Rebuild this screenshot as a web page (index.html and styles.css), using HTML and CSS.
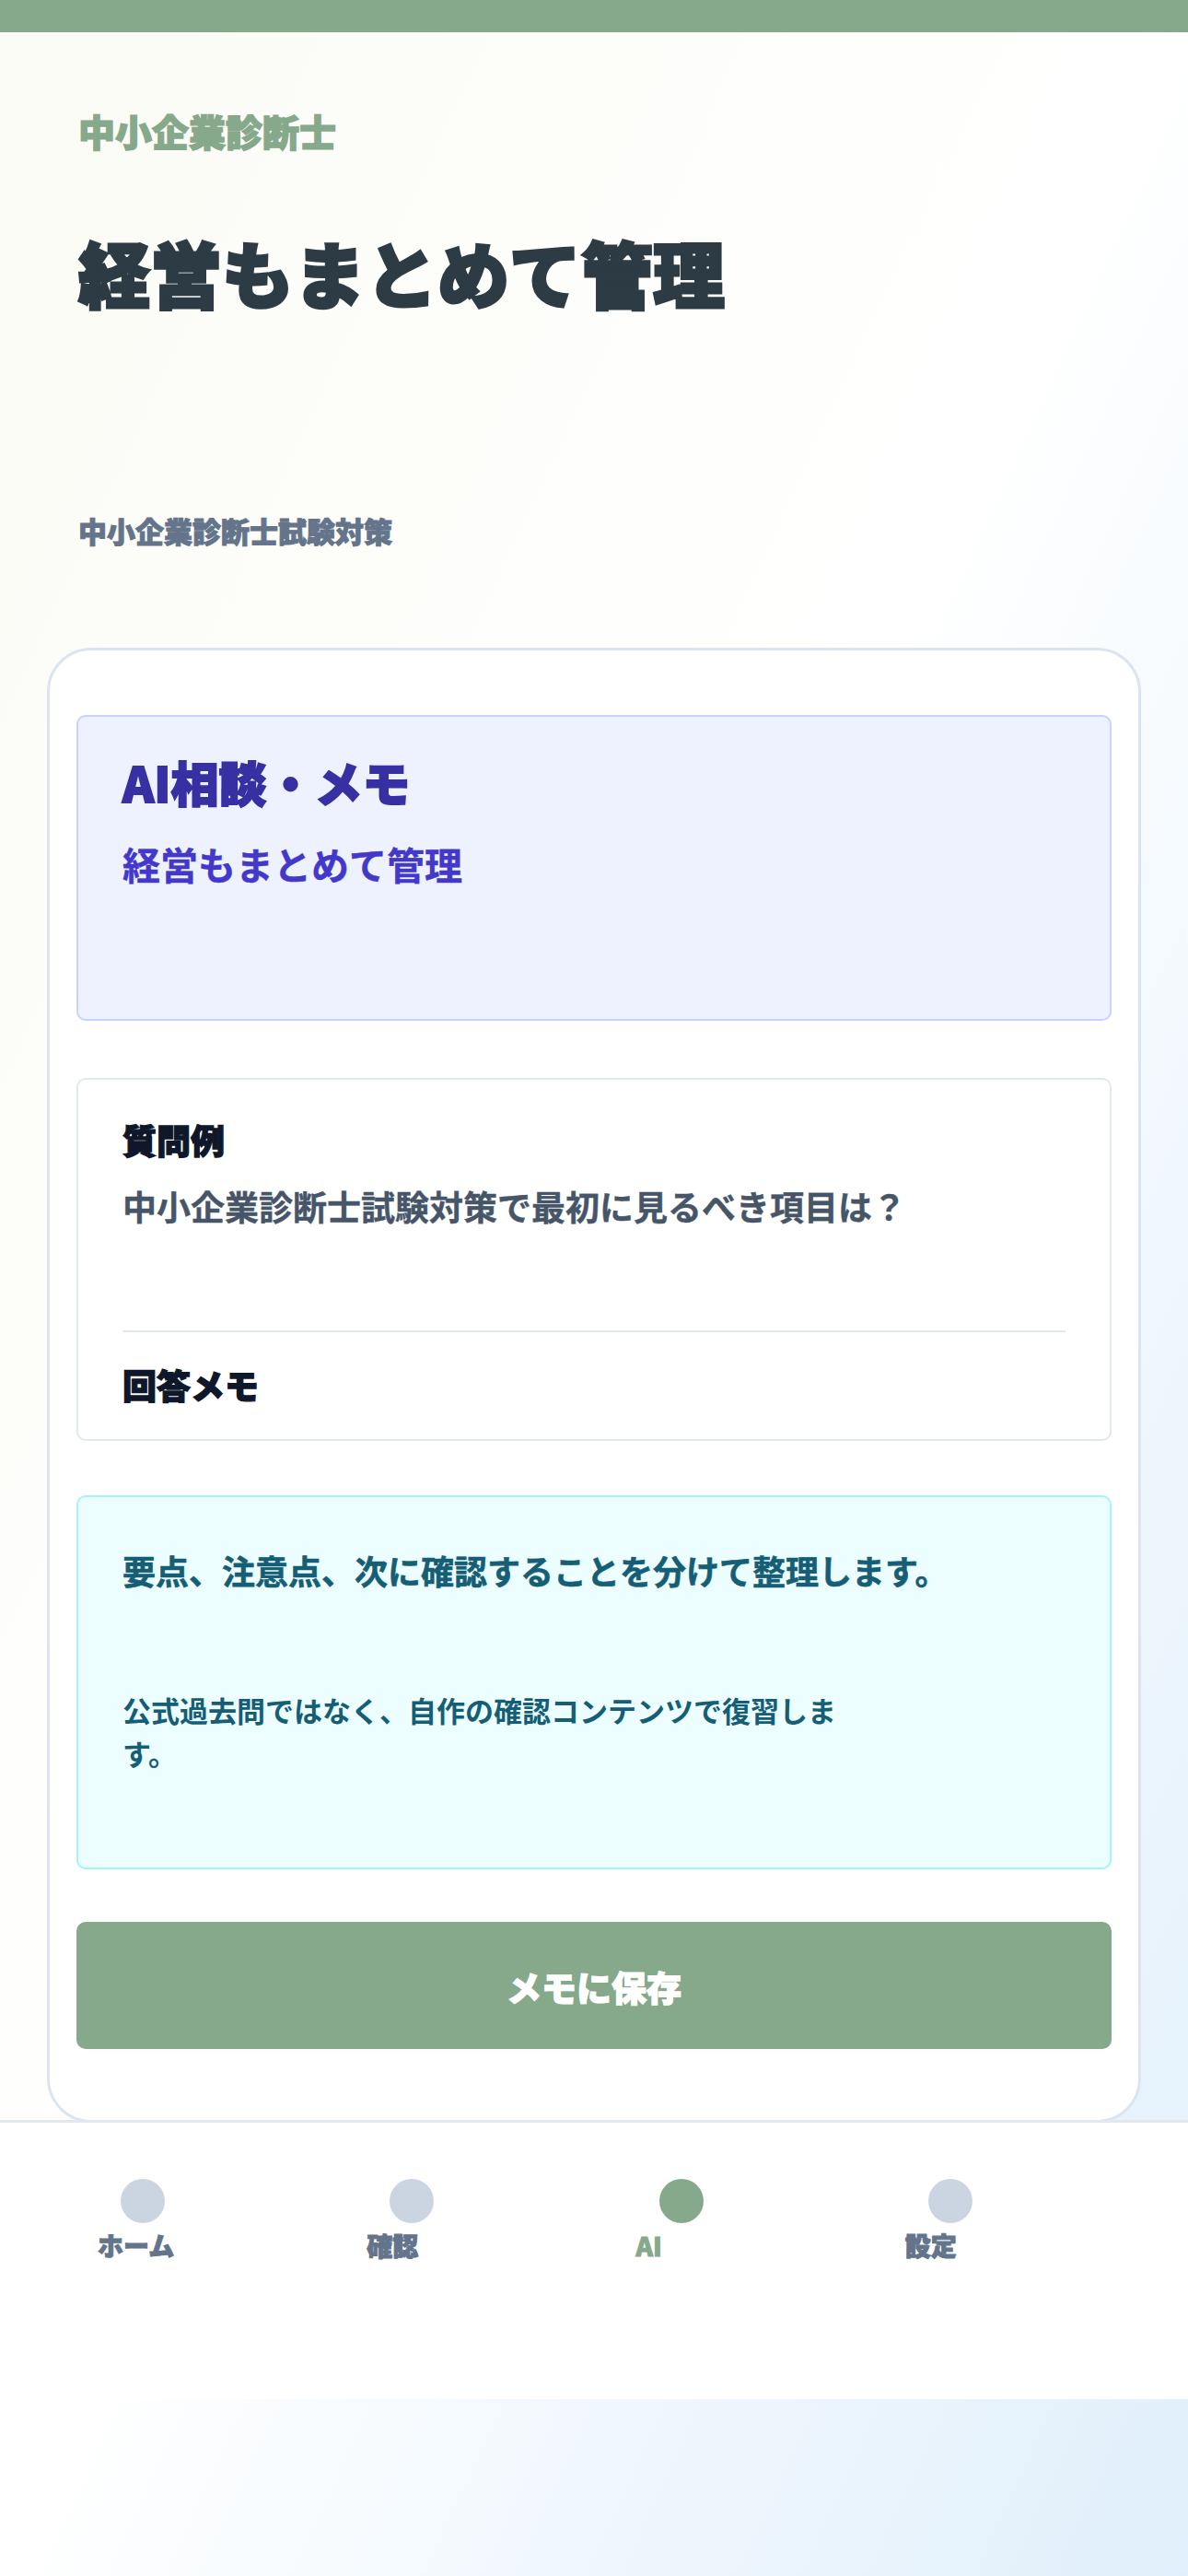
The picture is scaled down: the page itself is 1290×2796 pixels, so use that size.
FILE: index.html
```html
<html>
<head>
<meta charset="utf-8">
<link rel="stylesheet" href="styles.css">
</head>
<body>
<div class="topbar"></div>

<header class="hero">
  <p class="hero__brand">中小企業診断士</p>
  <h1 class="hero__title">経営もまとめて管理</h1>
  <p class="hero__lead">中小企業診断士試験対策</p>
</header>

<main class="card">
  <section class="panel panel--intro">
    <h2 class="panel__title">AI相談・メモ</h2>
    <p class="panel__sub">経営もまとめて管理</p>
  </section>

  <section class="panel panel--qa">
    <h3 class="qa__label">質問例</h3>
    <p class="qa__question">中小企業診断士試験対策で最初に見るべき項目は？</p>
    <hr class="qa__rule">
    <h3 class="qa__label qa__label--answer">回答メモ</h3>
  </section>

  <section class="panel panel--note">
    <p class="note__lead">要点、注意点、次に確認することを分けて整理します。</p>
    <p class="note__body">公式過去問ではなく、自作の確認コンテンツで復習します。</p>
  </section>

  <button class="save-btn" type="button">メモに保存</button>
</main>

<nav class="tabbar">
  <a class="tabbar__item">
    <span class="tabbar__dot"></span>
    <span class="tabbar__label">ホーム</span>
  </a>
  <a class="tabbar__item">
    <span class="tabbar__dot"></span>
    <span class="tabbar__label">確認</span>
  </a>
  <a class="tabbar__item tabbar__item--active">
    <span class="tabbar__dot"></span>
    <span class="tabbar__label">AI</span>
  </a>
  <a class="tabbar__item">
    <span class="tabbar__dot"></span>
    <span class="tabbar__label">設定</span>
  </a>
</nav>
</body>
</html>
```

FILE: styles.css
```css
/* reset */
* {
  margin: 0;
  padding: 0;
  box-sizing: border-box;
}

html {
  min-height: 100%;
}

body {
  min-height: 100vh;
  font-family: "Noto Sans CJK JP", "Noto Sans", sans-serif;
  line-height: 1.2;
  background: linear-gradient(to bottom right, #fbfbf5 0%, #ffffff 50%, #e0effb 100%);
}

.topbar {
  height: 35px;
  background-color: #86a98b;
}

/* hero */
.hero {
  padding: 83px 85px 0;
}

.hero__brand {
  font-size: 40px;
  font-weight: 900;
  color: #86a98b;
  -webkit-text-stroke: 1.4px currentColor;
}

.hero__title {
  margin-top: 83px;
  font-size: 78px;
  font-weight: 900;
  color: #2d3b45;
  -webkit-text-stroke: 3px currentColor;
}

.hero__lead {
  margin-top: 214px;
  font-size: 31px;
  font-weight: 900;
  color: #64748b;
  -webkit-text-stroke: 1px currentColor;
}

/* card */
.card {
  margin: 109px 51px 0;
  padding: 70px 29px 77px;
  background-color: #fff;
  border: 3px solid #dbe4f0;
  border-radius: 48px;
}

.panel {
  border-radius: 10px;
  border: 2px solid #e2e8f0;
  padding: 0 48px;
}

.panel--intro {
  height: 332px;
  padding-top: 40px;
  background-color: #eef2ff;
  border-color: #c7d2fe;
}

.panel__title {
  font-size: 52px;
  font-weight: 900;
  color: #3730a3;
  -webkit-text-stroke: 1.8px currentColor;
}

.panel__sub {
  margin-top: 33px;
  font-size: 41px;
  font-weight: 700;
  color: #4338ca;
  -webkit-text-stroke: 0.4px currentColor;
}

.panel--qa {
  margin-top: 62px;
  padding-top: 43px;
  padding-bottom: 37px;
  background-color: #fff;
}

.qa__label {
  font-size: 37px;
  font-weight: 900;
  color: #0f172a;
  -webkit-text-stroke: 1.3px currentColor;
}

.qa__question {
  margin-top: 28px;
  font-size: 37px;
  font-weight: 700;
  color: #475569;
  -webkit-text-stroke: 0.4px currentColor;
}

.qa__rule {
  margin-top: 112px;
  height: 2px;
  border: 0;
  background-color: #e2e8f0;
}

.qa__label--answer {
  margin-top: 35px;
}

.panel--note {
  margin-top: 59px;
  padding-top: 58px;
  padding-bottom: 101px;
  background-color: #ecfeff;
  border-color: #a5f3fc;
}

.note__lead {
  font-size: 36px;
  font-weight: 700;
  color: #155e75;
  -webkit-text-stroke: 0.6px currentColor;
}

.note__body {
  margin-top: 107px;
  max-width: 790px;
  font-size: 31px;
  font-weight: 700;
  line-height: 1.5;
  color: #155e75;
}

.save-btn {
  display: block;
  width: 100%;
  height: 138px;
  margin-top: 57px;
  border: 0;
  border-radius: 10px;
  background-color: #86a98b;
  color: #fff;
  font-family: inherit;
  font-size: 38px;
  font-weight: 900;
  -webkit-text-stroke: 1.3px currentColor;
  cursor: pointer;
}

/* bottom tabs */
.tabbar {
  margin-top: -3px;
  height: 303px;
  padding: 61px 15px 0 106px;
  background-color: #fff;
  border-top: 3px solid #e2e8f0;
  display: grid;
  grid-template-columns: repeat(4, 1fr);
  align-items: start;
}

.tabbar__item {
  width: 98px;
  display: flex;
  flex-direction: column;
  color: #64748b;
  text-decoration: none;
}

.tabbar__dot {
  width: 48px;
  height: 48px;
  margin: 0 auto;
  border-radius: 50%;
  background-color: #cbd5e1;
}

.tabbar__label {
  margin-top: 8px;
  font-size: 28px;
  font-weight: 900;
  white-space: nowrap;
  -webkit-text-stroke: 1px currentColor;
}

.tabbar__item--active {
  color: #86a98b;
}

.tabbar__item--active .tabbar__dot {
  background-color: #86a98b;
}
```
